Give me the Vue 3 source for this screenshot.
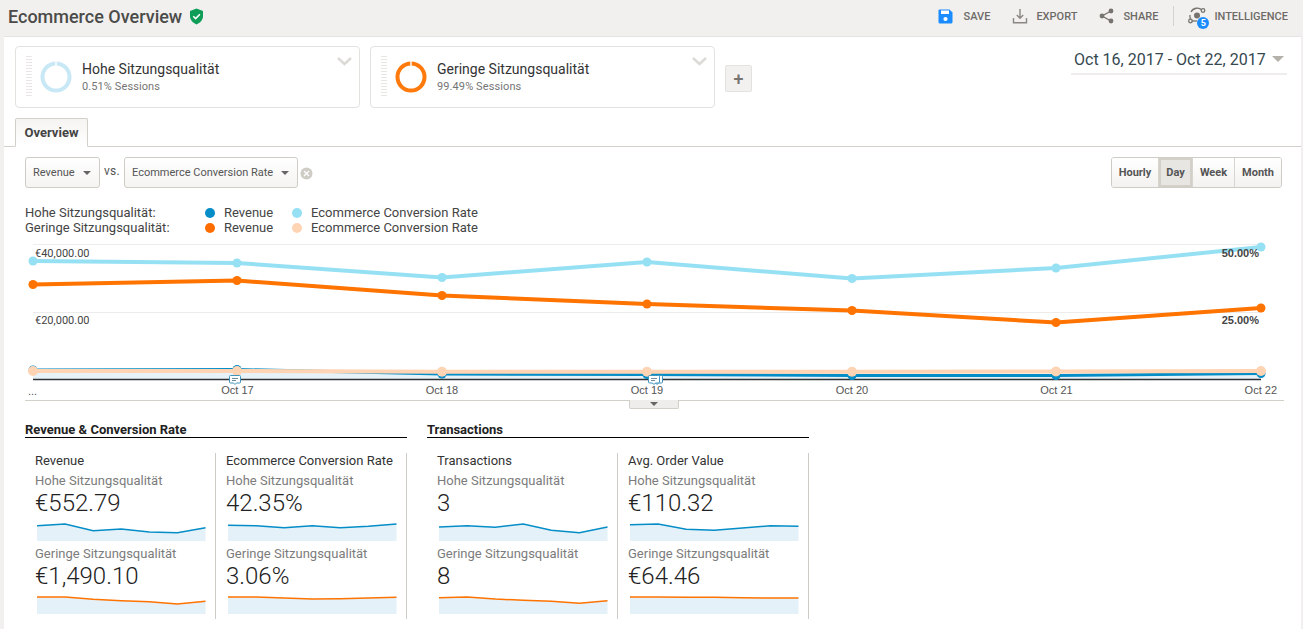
<template>
  <div class="page">
    <header class="topbar">
      <div class="title">
        <h1>Ecommerce Overview</h1>
        <svg class="shield" width="15" height="17" viewBox="0 0 15 17">
          <path d="M7.5 0.5 L14 3 V8 C14 12 11 15 7.5 16.5 C4 15 1 12 1 8 V3 Z" fill="#0f9d58" />
          <path d="M4.3 8.3 L6.6 10.6 L10.9 6.2" fill="none" stroke="#fff" stroke-width="1.6" />
        </svg>
      </div>
      <div class="actions">
        <button class="action save">
          <svg width="15" height="15" viewBox="0 0 15 15">
            <path d="M1.5 0.5 H11.5 L14.5 3.5 V13 Q14.5 14.5 13 14.5 H2 Q0.5 14.5 0.5 13 V1.5 Q0.5 0.5 1.5 0.5 Z" fill="#1a8cff" />
            <rect x="3" y="1.5" width="8" height="3.5" fill="#fff" />
            <circle cx="7.5" cy="10" r="2.1" fill="#fff" />
          </svg>
          <span>SAVE</span>
        </button>
        <button class="action export">
          <svg width="16" height="16" viewBox="0 0 16 16" fill="none" stroke="#8a8782" stroke-width="1.4">
            <path d="M8 1 V10 M4.8 7 L8 10.2 L11.2 7" />
            <path d="M1.5 10 V14.8 H14.5 V10" />
          </svg>
          <span>EXPORT</span>
        </button>
        <button class="action share">
          <svg width="15" height="16" viewBox="0 0 15 16">
            <path d="M12 3 L3 8 L12 13" fill="none" stroke="#77746f" stroke-width="1.3" />
            <circle cx="12" cy="3" r="2.4" fill="#77746f" />
            <circle cx="3" cy="8" r="2.4" fill="#77746f" />
            <circle cx="12" cy="13" r="2.4" fill="#77746f" />
          </svg>
          <span>SHARE</span>
        </button>
        <span class="divider"></span>
        <button class="action intel">
          <span class="intel-icon">
            <svg width="19" height="18" viewBox="0 0 19 18" fill="none" stroke="#77746f" stroke-width="1.3">
              <path d="M3 5 A7 7 0 0 1 14 3" />
              <path d="M2.5 12 A7.5 7.5 0 0 1 2 8" />
              <path d="M3.5 14 H9" />
              <circle cx="9" cy="8.5" r="3" fill="#77746f" stroke="none" />
              <circle cx="15" cy="3.5" r="1.8" />
              <circle cx="2.5" cy="14" r="1.8" />
            </svg>
            <b class="badge">5</b>
          </span>
          <span>INTELLIGENCE</span>
        </button>
      </div>
    </header>

    <main class="content">
      <div class="segments">
        <div class="segment" v-for="s in segments" :key="s.name">
          <span class="grip"></span>
          <svg class="donut" width="32" height="32" viewBox="0 0 32 32">
            <circle cx="16" cy="16" r="13.5" fill="none" :stroke="s.color" stroke-width="4" />
            <rect x="15.3" y="0" width="1.4" height="5" fill="#fff" />
          </svg>
          <div class="segment-text">
            <div class="segment-name">{{ s.name }}</div>
            <div class="segment-share">{{ s.share }}</div>
          </div>
          <svg class="chevron" width="15" height="9" viewBox="0 0 15 9">
            <path d="M1 1 L7.5 7 L14 1" fill="none" stroke="#dcdad6" stroke-width="2.4" />
          </svg>
        </div>
        <button class="add">+</button>
        <div class="date">
          <span>Oct 16, 2017 - Oct 22, 2017</span>
          <i class="date-arrow"></i>
        </div>
      </div>

      <div class="tabs">
        <div class="tab">Overview</div>
      </div>

      <div class="controls">
        <div class="select first">Revenue<i class="caret"></i></div>
        <span class="vs">vs.</span>
        <div class="select second">Ecommerce Conversion Rate<i class="caret"></i></div>
        <svg class="clear" width="13" height="13" viewBox="0 0 13 13">
          <circle cx="6.5" cy="6.5" r="6" fill="#cfccc6" />
          <path d="M4 4 L9 9 M9 4 L4 9" stroke="#fff" stroke-width="1.3" />
        </svg>
        <div class="periods">
          <button v-for="p in periods" :key="p" :class="{ on: p === 'Day' }">{{ p }}</button>
        </div>
      </div>

      <div class="legend">
        <div class="legend-row" v-for="row in legend" :key="row.name">
          <span class="legend-name">{{ row.name }}</span>
          <i class="dot" :style="{ background: row.c1 }"></i>
          <span class="legend-a">Revenue</span>
          <i class="dot" :style="{ background: row.c2 }"></i>
          <span>Ecommerce Conversion Rate</span>
        </div>
      </div>

      <div class="chart">
        <svg width="1257" height="160" viewBox="25 240 1257 160">
          <path d="M33 244.5 H1261 M33 312.5 H1261" stroke="#ececec" stroke-width="1" />
          <path :d="blueArea" fill="#e6f2f8" />
          <path d="M33 379.5 H1261" stroke="#2f3335" stroke-width="1.4" />
          <template v-for="l in lines" :key="l.color">
            <path :d="toLine(l.ys)" fill="none" :stroke="l.color" :stroke-width="l.width" />
            <circle v-for="(y, i) in l.ys" :key="i" :cx="xs[i]" :cy="y" :r="l.r" :fill="l.color" />
          </template>

          <g v-for="x in [235, 657, 654]" :key="x" class="note" :transform="`translate(${x - 6} 375)`">
            <path d="M1.5 0.5 H10.5 Q11.5 0.5 11.5 1.5 V7 Q11.5 8 10.5 8 H7.5 L6 9.5 L4.5 8 H1.5 Q0.5 8 0.5 7 V1.5 Q0.5 0.5 1.5 0.5 Z" fill="#fff" stroke="#3f94bd" />
            <path d="M3 3.5 H9 M3 5.5 H7" stroke="#6e8e9e" stroke-width="1" />
          </g>

          <text class="ylab" x="35" y="257">€40,000.00</text>
          <text class="ylab" x="35" y="324">€20,000.00</text>
          <text class="rlab" x="1259" y="257" text-anchor="end">50.00%</text>
          <text class="rlab" x="1259" y="324" text-anchor="end">25.00%</text>
          <text class="xlab" x="28" y="395">...</text>
          <text v-for="d in days" :key="d.label" class="xlab" :x="d.x" y="394" :text-anchor="d.anchor">{{ d.label }}</text>
        </svg>
        <div class="collapse"><i class="caret"></i></div>
      </div>

      <div class="scorecards">
        <section class="group" v-for="g in groups" :key="g.title">
          <h2>{{ g.title }}</h2>
          <div class="metrics">
            <div class="metric" v-for="m in g.metrics" :key="m.name">
              <div class="metric-name">{{ m.name }}</div>
              <template v-for="row in m.rows" :key="row.label">
                <div class="metric-label">{{ row.label }}</div>
                <div class="metric-value">{{ row.value }}</div>
                <svg class="spark" width="169" height="20" viewBox="0 0 169 20">
                  <path :d="sparkArea(row.pts)" fill="#e4f1f8" />
                  <path :d="sparkLine(row.pts)" fill="none" :stroke="row.color" stroke-width="1.5" />
                </svg>
              </template>
            </div>
          </div>
        </section>
      </div>
    </main>
  </div>
</template>

<script setup>
const BLUE = '#058dc7'
const ORANGE = '#ff7300'
const HIGH = 'Hohe Sitzungsqualität'
const LOW = 'Geringe Sitzungsqualität'

const segments = [
  { name: HIGH, share: '0.51% Sessions', color: '#c9e8f5' },
  { name: LOW, share: '99.49% Sessions', color: '#ff7a0d' }
]

const periods = ['Hourly', 'Day', 'Week', 'Month']

const legend = [
  { name: HIGH + ':', c1: BLUE, c2: '#96e0f4' },
  { name: LOW + ':', c1: '#ff6d00', c2: '#ffd4b5' }
]

const xs = [33, 237, 442, 647, 852, 1056, 1261]

const lines = [
  { color: BLUE, width: 3, r: 4.5, ys: [370, 369.5, 374, 374.5, 375.5, 375.5, 373.5] },
  { color: '#96e0f4', width: 4, r: 4.5, ys: [261, 263, 277.5, 262, 278.5, 268, 247] },
  { color: '#ff7300', width: 4, r: 4.5, ys: [284.5, 280.5, 295.5, 304, 310.5, 322.5, 308] },
  { color: '#ffd4b5', width: 4, r: 5, ys: [371, 371, 371.7, 371.7, 371.7, 371.5, 371] }
]

const days = [
  { label: 'Oct 17', x: 237.5, anchor: 'middle' },
  { label: 'Oct 18', x: 442, anchor: 'middle' },
  { label: 'Oct 19', x: 647, anchor: 'middle' },
  { label: 'Oct 20', x: 852, anchor: 'middle' },
  { label: 'Oct 21', x: 1056.5, anchor: 'middle' },
  { label: 'Oct 22', x: 1277, anchor: 'end' }
]

const toLine = (ys) => ys.map((y, i) => `${i ? 'L' : 'M'}${xs[i]} ${y}`).join(' ')
const blueArea = `${toLine(lines[0].ys)} L1261 379 L33 379 Z`

const sparkLine = (pts) =>
  pts.map((y, i) => `${i ? 'L' : 'M'}${(i * 168.5) / 6} ${y}`).join(' ')
const sparkArea = (pts) => `${sparkLine(pts)} L168.5 20 L0 20 Z`

const row = (label, value, color, pts) => ({ label, value, color, pts })

const groups = [
  {
    title: 'Revenue & Conversion Rate',
    metrics: [
      {
        name: 'Revenue',
        rows: [
          row(HIGH, '€552.79', BLUE, [4.7, 3, 9.7, 8, 11, 11.7, 6.7]),
          row(LOW, '€1,490.10', ORANGE, [3, 3, 5.3, 6.7, 7.7, 10, 7.3])
        ]
      },
      {
        name: 'Ecommerce Conversion Rate',
        rows: [
          row(HIGH, '42.35%', BLUE, [4.3, 4.7, 6.7, 4.7, 6.7, 5.3, 3]),
          row(LOW, '3.06%', ORANGE, [3, 3, 4, 5, 4.7, 4, 3.3])
        ]
      }
    ]
  },
  {
    title: 'Transactions',
    metrics: [
      {
        name: 'Transactions',
        rows: [
          row(HIGH, '3', BLUE, [6, 4.7, 6.3, 3, 9.3, 11.7, 6]),
          row(LOW, '8', ORANGE, [3.7, 3, 5, 6.3, 7.3, 9.3, 6.7])
        ]
      },
      {
        name: 'Avg. Order Value',
        rows: [
          row(HIGH, '€110.32', BLUE, [3.7, 3, 8.3, 9.3, 7, 4.7, 5.3]),
          row(LOW, '€64.46', ORANGE, [3, 3, 3.3, 3.3, 3.7, 4, 4])
        ]
      }
    ]
  }
]
</script>

<style>
html, body {
  margin: 0;
  background: #f1f0ef;
  overflow: hidden;
}
</style>

<style scoped>
.page {
  width: 1303px;
  height: 629px;
  overflow: hidden;
  background: #f1f0ef;
  font-family: Roboto, sans-serif;
  color: #333;
}

.topbar {
  height: 36px;
  display: flex;
  justify-content: space-between;
  align-items: center;
  padding: 0 15px 4px 8px;
  box-sizing: border-box;
}

.title { display: flex; align-items: center; gap: 7px; }
.title h1 { margin: 0; font-size: 18px; font-weight: 500; color: #4b4b49; }

.actions { display: flex; align-items: center; }
.action {
  display: flex;
  align-items: center;
  background: none;
  border: none;
  padding: 0;
  font: 500 11px Roboto, sans-serif;
  color: #6e6b67;
}
.save { gap: 11px; margin-right: 22px; }
.export { gap: 8px; margin-right: 22px; }
.share { gap: 9px; margin-right: 15px; }
.divider { width: 1px; height: 20px; background: #d5d3ce; margin-right: 14px; }
.intel { gap: 7px; }
.intel-icon { position: relative; display: block; width: 19px; height: 18px; }
.intel-icon svg { display: block; }
.badge {
  position: absolute;
  left: 9px;
  top: 10px;
  width: 12px;
  height: 12px;
  border-radius: 50%;
  background: #1a8cff;
  color: #fff;
  font: 700 9px/12px Roboto, sans-serif;
  text-align: center;
}

.content {
  margin: 0 2px 0 4px;
  height: 593px;
  background: #fff;
  border-top: 1px solid #e6e4e1;
  box-sizing: border-box;
}

.segments {
  display: flex;
  align-items: flex-start;
  padding: 9px 14px 0 11px;
  height: 71px;
  box-sizing: border-box;
}

.segment {
  position: relative;
  width: 345px;
  height: 62px;
  box-sizing: border-box;
  border: 1px solid #e3e2df;
  border-radius: 4px;
  margin-right: 10px;
  display: flex;
  align-items: center;
  padding-left: 10px;
}
.grip {
  width: 6px;
  height: 42px;
  background: repeating-linear-gradient(#e8e7e4 0 1px, #fff 1px 3px);
  margin-right: 8px;
}
.donut { margin-right: 10px; }
.segment-name { font-size: 14px; color: #333; line-height: 17px; }
.segment-share { font-size: 11px; color: #757575; line-height: 14px; letter-spacing: 0.1px; margin-top: 2px; }
.chevron { position: absolute; right: 7px; top: 10px; }

.add {
  width: 27px;
  height: 27px;
  margin-top: 19px;
  padding: 0;
  border: 1px solid #e3e2df;
  border-radius: 2px;
  background: #f2f1ef;
  color: #77746f;
  font: 500 18px/22px Roboto, sans-serif;
}

.date {
  margin-left: auto;
  margin-top: 3px;
  width: 216px;
  height: 26px;
  box-sizing: border-box;
  border-bottom: 2px solid #eeedeb;
  display: flex;
  align-items: center;
  justify-content: space-between;
  padding: 0 3px 4px;
  font-size: 16px;
  color: #35484f;
}
.date-arrow {
  width: 0;
  height: 0;
  border-left: 6px solid transparent;
  border-right: 6px solid transparent;
  border-top: 6px solid #b4b1aa;
}

.tabs {
  margin-top: 10px;
  height: 29px;
  padding-left: 11px;
  border-bottom: 1px solid #d3d0c9;
  box-sizing: border-box;
}
.tab {
  width: 73px;
  height: 29px;
  box-sizing: border-box;
  border: 1px solid #d3d0c9;
  border-bottom-color: #fff;
  border-radius: 2px 2px 0 0;
  background: linear-gradient(#f5f4f2, #fff);
  text-align: center;
  font: 700 13px/28px Roboto, sans-serif;
  color: #444;
}

.controls {
  display: flex;
  align-items: center;
  height: 31px;
  margin-top: 10px;
  padding: 0 19px 0 21px;
}
.select {
  position: relative;
  height: 31px;
  box-sizing: border-box;
  border: 1px solid #cfccc5;
  border-radius: 3px;
  background: linear-gradient(#fff, #f5f4f2);
  font-size: 11px;
  line-height: 29px;
  color: #555;
  padding-left: 7px;
}
.select.first { width: 75px; }
.select.second { width: 174px; }
.select .caret { position: absolute; right: 8px; top: 13px; }
.caret {
  display: block;
  width: 0;
  height: 0;
  border-left: 4px solid transparent;
  border-right: 4px solid transparent;
  border-top: 4px solid #666;
}
.vs { width: 24px; text-align: center; font-size: 12px; letter-spacing: 0.3px; color: #555; margin-top: -3px; }
.clear { margin-left: 2px; margin-top: 2px; }

.periods {
  margin-left: auto;
  display: flex;
  height: 31px;
  box-sizing: border-box;
  border: 1px solid #cfccc5;
  border-radius: 3px;
  overflow: hidden;
}
.periods button {
  border: none;
  border-left: 1px solid #d8d5cf;
  background: linear-gradient(#fff, #f3f2f0);
  padding: 0;
  font: 700 11px Roboto, sans-serif;
  color: #555;
}
.periods button:nth-child(1) { width: 46px; border-left: none; }
.periods button:nth-child(2) { width: 34px; }
.periods button:nth-child(3) { width: 42px; }
.periods button:nth-child(4) { width: 47px; }
.periods button.on {
  background: #e8e6e3;
  box-shadow: inset 0 0 0 2px #d3d0ca;
}

.legend { margin-top: 17px; padding-left: 21px; font-size: 13px; color: #444; }
.legend-row { display: flex; align-items: center; height: 15px; }
.legend-name { width: 180px; }
.dot { width: 10px; height: 10px; border-radius: 50%; margin-right: 9px; }
.legend-a { width: 68px; }

.chart {
  position: relative;
  margin: 5px 17px 0 21px;
  height: 161px;
  box-sizing: border-box;
  border-bottom: 1px solid #d3d0c9;
}
.chart svg { display: block; overflow: visible; }
.ylab { font: 11px Roboto, sans-serif; fill: #444; }
.rlab { font: 700 11px "Liberation Sans", sans-serif; fill: #444; }
.xlab { font: 11px "Liberation Sans", sans-serif; fill: #555; }
.collapse {
  position: absolute;
  left: 604px;
  top: 160px;
  width: 50px;
  height: 9px;
  box-sizing: border-box;
  border: 1px solid #d3d0c9;
  border-top: none;
  border-radius: 0 0 2px 2px;
  background: #eeedeb;
  display: flex;
  justify-content: center;
  padding-top: 2px;
}

.scorecards { display: flex; gap: 20px; margin-top: 21px; padding-left: 21px; }
.group { width: 382px; }
.group h2 {
  margin: 0;
  height: 16px;
  box-sizing: border-box;
  border-bottom: 1px solid #000;
  font-size: 13px;
  line-height: 15px;
  font-weight: 700;
  color: #222;
}
.metrics { display: flex; margin-top: 15px; }
.metric {
  width: 191px;
  height: 166px;
  box-sizing: border-box;
  border-right: 1px solid #cfccc5;
  padding-left: 10px;
}
.metric-name { font-size: 13px; line-height: 15px; color: #333; }
.metric-label { font-size: 13px; line-height: 15px; color: #7c7c7c; margin-top: 5px; }
.metric-value { font-size: 24px; font-weight: 300; line-height: 28px; color: #222; margin-top: 1px; }
.spark { display: block; margin: 4px 0 0 2px; }
</style>
